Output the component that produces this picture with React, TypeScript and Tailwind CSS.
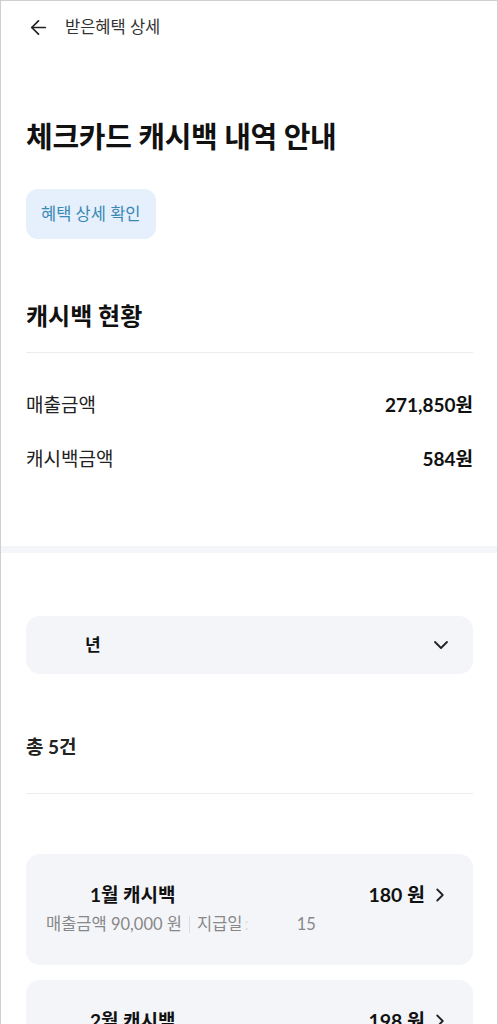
import { ArrowLeft, ChevronDown, ChevronRight } from 'lucide-react';

const font = { fontFamily: 'Lato, "Noto Sans CJK KR", sans-serif' };

const history = [
  { month: '1월 캐시백', amount: '180 원', sales: '90,000 원', day: '15' },
  { month: '2월 캐시백', amount: '198 원', sales: '99,000 원', day: '15' },
];

export default function App() {
  return (
    <div
      className="h-[1024px] overflow-hidden border-x border-t border-[#cfcfcf] bg-white text-[#111]"
      style={font}
    >
      {/* header */}
      <div className="flex h-[52px] items-center gap-[15px] px-[26px]">
        <ArrowLeft className="h-[23px] w-[23px] text-[#222]" strokeWidth={1.8} />
        <span className="text-[16.5px] text-[#333]">받은혜택 상세</span>
      </div>

      <div className="pl-[25px] pr-[24px]">
        <h1 className="mt-[64px] text-[29px] font-bold leading-[40px] tracking-[-0.3px]">
          체크카드 캐시백 내역 안내
        </h1>
        <button className="mt-[32px] flex h-[50px] items-center rounded-[12px] bg-[#e5f0fc] px-[15px] text-[16.5px] text-[#3a88b4]">
          혜택 상세 확인
        </button>

        <h2 className="mt-[60px] text-[24px] font-bold leading-[34px]">캐시백 현황</h2>
        <div className="mt-[19px] h-px bg-[#ececec]" />

        <div className="mt-[38px] flex items-center justify-between text-[19px] leading-[28px]">
          <span className="text-[#222]">매출금액</span>
          <span className="font-bold">271,850원</span>
        </div>
        <div className="mt-[26px] flex items-center justify-between text-[19px] leading-[28px]">
          <span className="text-[#222]">캐시백금액</span>
          <span className="font-bold">584원</span>
        </div>
      </div>

      <div className="mt-[73px] h-[7px] bg-[#f4f5f8]" />

      <div className="pl-[25px] pr-[24px]">
        <div className="mt-[63px] flex h-[58px] items-center justify-between rounded-[14px] bg-[#f4f5f9] pl-[59px] pr-[20px]">
          <span className="text-[17px] font-bold">년</span>
          <ChevronDown className="h-[24px] w-[24px] text-[#222]" strokeWidth={1.8} />
        </div>

        <div className="mt-[59px] text-[19px] font-bold leading-[28px] text-[#222]">총 5건</div>
        <div className="mt-[32px] h-px bg-[#ececec]" />

        <div className="mt-[60px] flex flex-col gap-[15px]">
          {history.map((h) => (
            <div key={h.month} className="h-[111px] rounded-[14px] bg-[#f4f5f9] pl-[20px] pr-[22px] pt-[27px]">
              <div className="flex items-center justify-between">
                <span className="pl-[44px] text-[19px] font-bold leading-[28px]">{h.month}</span>
                <div className="flex items-center gap-[4px]">
                  <span className="text-[19.5px] font-bold leading-[28px]">{h.amount}</span>
                  <ChevronRight className="h-[22px] w-[22px] text-[#222]" strokeWidth={2} />
                </div>
              </div>
              <div className="mt-[3px] flex items-center text-[16.5px] leading-[24px] text-[#888]">
                <span>매출금액 {h.sales}</span>
                <span className="mx-[7px] h-[17px] w-px bg-[#ddd]" />
                <span>지급일</span>
                <span className="ml-[2px] text-[#ddd]">:</span>
                <span className="ml-[48px]">{h.day}</span>
              </div>
            </div>
          ))}
        </div>
      </div>
    </div>
  );
}
